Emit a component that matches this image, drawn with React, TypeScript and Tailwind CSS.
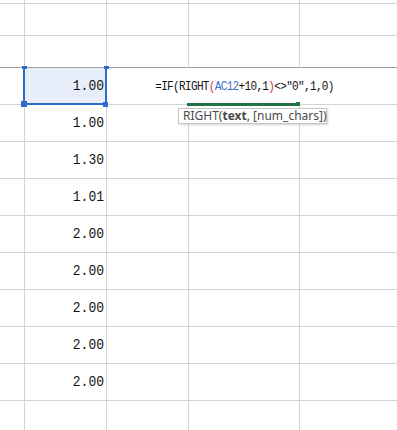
const line = "border-[#d4d4d4]";
const mono = "font-['Liberation_Mono',monospace]";

const values = ["1.00", "1.30", "1.01", "2.00", "2.00", "2.00", "2.00", "2.00"];

function Cells({ h, dark }: { h: string; dark?: boolean }) {
  const b = dark ? "border-b-[#9e9e9e]" : "";
  return (
    <div className={`flex ${h}`}>
      <div className={`w-[25px] shrink-0 border-r border-b ${line} ${b}`} />
      <div className={`w-[82px] shrink-0 border-r border-b ${line} ${b}`} />
      <div className={`w-[82px] shrink-0 border-r border-b ${line} ${b}`} />
      <div className={`w-[111px] shrink-0 border-r border-b ${line} ${b}`} />
      <div className={`flex-1 border-b ${line} ${b}`} />
    </div>
  );
}

function ValueRow({ value }: { value?: string }) {
  return (
    <div className="flex h-[37px]">
      <div className={`w-[25px] shrink-0 border-r border-b ${line}`} />
      <div className={`w-[82px] shrink-0 border-r border-b ${line} flex items-center justify-end pr-[2px] pt-[1px]`}>
        {value && <span className={`${mono} text-[13px] text-[#111] scale-y-[1.15]`}>{value}</span>}
      </div>
      <div className={`w-[82px] shrink-0 border-r border-b ${line}`} />
      <div className={`w-[111px] shrink-0 border-r border-b ${line}`} />
      <div className={`flex-1 border-b ${line}`} />
    </div>
  );
}

export default function App() {
  return (
    <div className="w-[397px] h-[430px] overflow-hidden bg-white">
      <Cells h="h-[4px]" />
      <Cells h="h-[32px]" />
      <Cells h="h-[32px]" dark />

      {/* editing row */}
      <div className="flex h-[37px]">
        <div className={`w-[25px] shrink-0 border-r border-b ${line}`} />
        <div className={`relative w-[82px] shrink-0 border-r border-b ${line} bg-[#e8eef9] flex items-center justify-end pr-[2px] pt-[1px]`}>
          <span className={`${mono} text-[13px] text-[#111] scale-y-[1.15]`}>1.00</span>
          <div className="absolute -left-[2px] top-0 -right-[1px] -bottom-[1px] border-2 border-t-0 border-[#2f6bcc]" />
          <div className="absolute -left-[3px] -top-[2px] w-[5px] h-[3px] bg-[#2f6bcc]" />
          <div className="absolute left-[79px] -top-[2px] w-[5px] h-[3px] bg-[#2f6bcc]" />
          <div className="absolute -left-[4px] top-[33px] w-[6px] h-[6px] bg-[#2f6bcc] z-10" />
          <div className="absolute left-[78px] top-[34px] w-[5px] h-[5px] bg-[#2f6bcc] z-10" />
        </div>
        <div className={`flex-1 flex border-b ${line}`}>
          <div className="w-[82px] shrink-0" />
          <div className="relative w-[111px] shrink-0 flex items-center justify-center pt-[1px]">
            <span className={`${mono} text-[11px] tracking-[-0.65px] text-[#111] whitespace-nowrap scale-y-[1.2]`}>
              =IF(RIGHT<span className="text-[#c8393f]">(</span>
              <span className="text-[#3a6fc4]">AC12</span>+10,1<span className="text-[#c8393f]">)</span>
              &lt;&gt;"0",1,0)
            </span>
            <div className="absolute -left-[2px] -bottom-[2px] w-[109px] h-[3px] bg-[#217346] z-10" />
            <div className="absolute left-[107px] -bottom-[2px] w-[4px] h-[4px] bg-[#217346] z-10" />
            <div className="absolute -left-[11px] top-[40px] w-[149px] h-[16px] border border-[#c6c6c6] bg-white shadow-[1px_1px_2px_rgba(0,0,0,0.18)] z-20 flex items-center px-[4px]">
              <span className="font-['Noto_Sans',sans-serif] text-[12px] leading-none text-[#4a4a4a] whitespace-nowrap">
                RIGHT(<span className="font-bold">text</span>, [num_chars])
              </span>
            </div>
          </div>
        </div>
      </div>

      {values.map((v, i) => (
        <ValueRow key={i} value={v} />
      ))}
      <ValueRow />
    </div>
  );
}
